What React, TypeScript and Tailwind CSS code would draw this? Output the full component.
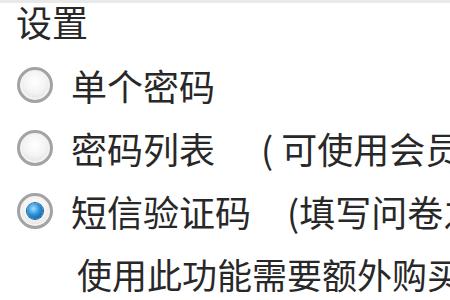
import React from "react";

function Radio({ checked }: { checked?: boolean }) {
  return (
    <span className="relative flex h-[36px] w-[36px] shrink-0 items-center justify-center rounded-full border-[3px] border-[#a3a3a3] bg-[radial-gradient(circle_at_50%_40%,#ffffff_0%,#f4f4f4_45%,#d6d6d6_100%)] shadow-[inset_0_0_0_2px_#f3f3f3]">
      {checked && (
        <span className="h-[16px] w-[16px] rounded-full bg-[radial-gradient(circle_at_40%_35%,#9fe0ff_0%,#2a8fd6_45%,#124a84_100%)] shadow-[0_0_0_1px_#1b5d95]" />
      )}
    </span>
  );
}

function Row({
  checked,
  children,
}: {
  checked?: boolean;
  children: React.ReactNode;
}) {
  return (
    <div className="flex h-[63px] items-center gap-[18px] pl-[17px] whitespace-nowrap">
      <Radio checked={checked} />
      {children}
    </div>
  );
}

export default function App() {
  return (
    <div
      className="h-[300px] w-[450px] overflow-hidden bg-white text-[#282828]"
      style={{ fontFamily: '"Noto Sans CJK SC", "Microsoft YaHei", sans-serif' }}
    >
      <div className="h-[3px] bg-[#e9e9e9]" />
      <div className="flex h-[36px] items-center pl-[16px] text-[36px] leading-none">
        设置
      </div>
      <div className="mt-[14px] text-[36px] leading-none">
        <Row>
          <span>单个密码</span>
        </Row>
        <Row>
          <span>密码列表</span>
          <span className="ml-[28px]">( 可使用会员功能</span>
        </Row>
        <Row checked>
          <span>短信验证码</span>
          <span className="ml-[18px]">(填写问卷之后</span>
        </Row>
      </div>
      <div className="flex h-[62px] items-center whitespace-nowrap pl-[77px] text-[35px] leading-none">
        使用此功能需要额外购买
      </div>
    </div>
  );
}
